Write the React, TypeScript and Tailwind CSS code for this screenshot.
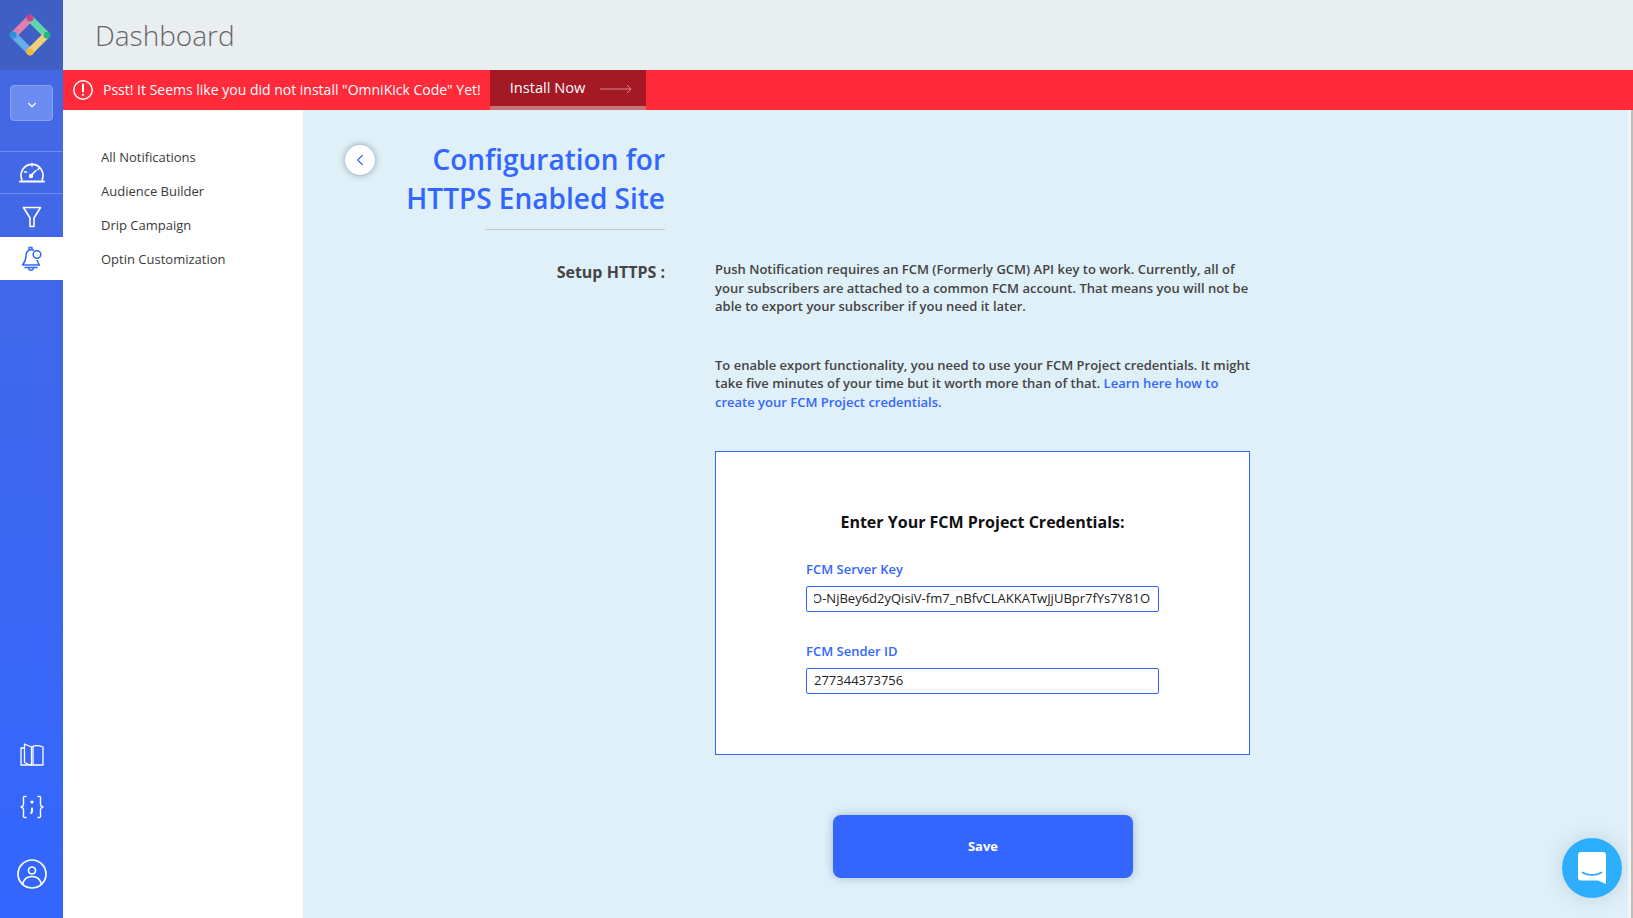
import { ChevronDown, ChevronLeft } from "lucide-react";

const subNavItems = ["All Notifications", "Audience Builder", "Drip Campaign", "Optin Customization"];

function Logo() {
  return (
    <svg width="42" height="42" viewBox="0 0 42 42" fill="none" strokeWidth="7" strokeLinecap="round">
      <path d="M21 4.500 L4.500 21" stroke="#e27fb1" />
      <path d="M21 4.500 L37.500 21" stroke="#5fd6a8" />
      <path d="M4.500 21 L21 37.500" stroke="#67aee6" />
      <path d="M37.500 21 L21 37.500" stroke="#f0cf78" />
      <circle cx="21" cy="4" r="3.500" fill="#d43d8a" />
      <circle cx="38" cy="21" r="3.500" fill="#1fb58d" />
      <circle cx="21" cy="38" r="3.500" fill="#f0b93a" />
      <circle cx="4" cy="21" r="3.500" fill="#2f8fd8" />
    </svg>
  );
}

function GaugeIcon() {
  return (
    <svg width="26" height="24" viewBox="0 0 26 24" fill="none" stroke="currentColor" strokeWidth="1.6" strokeLinecap="round">
      <path d="M3 20 A11 11 0 1 1 23 20" />
      <path d="M1 21.500 H25" strokeWidth="2" />
      <path d="M13 3.500 V6 M5.500 12 H7.500 M20.500 8 L19 9.500" />
      <path d="M12 15.500 L17 10.500" />
      <circle cx="12" cy="16" r="1.400" fill="currentColor" />
    </svg>
  );
}

function FunnelIcon() {
  return (
    <svg width="20" height="22" viewBox="0 0 20 22" fill="none" stroke="currentColor" strokeWidth="1.600" strokeLinejoin="round">
      <path d="M1.500 1.500 H18.500 L12 12 V20.500 H8 V12 Z" />
    </svg>
  );
}

function BellIcon() {
  return (
    <svg width="22" height="26" viewBox="0 0 22 26" fill="none" stroke="currentColor" strokeWidth="1.500" strokeLinecap="round" strokeLinejoin="round">
      <path d="M8 3.500 V1.500 H11 V3.500" />
      <path d="M12.500 4 C7 2.500 5 6.500 5 10 C5 14 4 16 1.500 19 H18.500 C17.500 17.500 16.800 16.500 16.200 14.500" />
      <path d="M4 21.500 H16" />
      <path d="M7.500 22 C8 25 12 25 12.500 22" />
      <circle cx="16" cy="8.500" r="3.800" />
    </svg>
  );
}

function BookIcon() {
  return (
    <svg width="24" height="24" viewBox="0 0 24 24" fill="none" stroke="currentColor" strokeWidth="1.300" strokeLinejoin="round">
      <path d="M11.500 22.500 L4.500 19.500 V1 L11.500 4 Z" />
      <path d="M11.500 4 C14 2.500 18 2 23 4 V22 H13 L11.500 22.500" />
      <path d="M4.500 5 H1 V22 H11.500" />
      <path d="M13 4 V21.500" />
    </svg>
  );
}

function CodeIcon() {
  return (
    <svg width="24" height="24" viewBox="0 0 24 24" fill="none" stroke="currentColor" strokeWidth="1.400" strokeLinecap="round" strokeLinejoin="round">
      <path d="M6 1.500 H4.500 C3 1.500 3.500 3 3.500 5 V9.500 C3.500 11 2.500 11.500 1 12 C2.500 12.500 3.500 13 3.500 14.500 V19 C3.500 21 3 22.500 4.500 22.500 H6" />
      <path d="M18 1.500 H19.500 C21 1.500 20.500 3 20.500 5 V9.500 C20.500 11 21.500 11.500 23 12 C21.500 12.500 20.500 13 20.500 14.500 V19 C20.500 21 21 22.500 19.500 22.500 H18" />
      <circle cx="12" cy="7" r="1.600" fill="currentColor" stroke="none" />
      <path d="M12 13.500 V16.500 L11.200 18" strokeWidth="2" />
    </svg>
  );
}

function UserIcon() {
  return (
    <svg width="30" height="30" viewBox="0 0 30 30" fill="none" stroke="currentColor" strokeWidth="1.700">
      <circle cx="15" cy="15" r="14" />
      <circle cx="15" cy="11.500" r="3.500" />
      <path d="M5.500 25 C7 19.500 11 17.500 15 17.500 C19 17.500 23 19.500 24.500 25" />
    </svg>
  );
}

function AlertIcon() {
  return (
    <svg width="20" height="20" viewBox="0 0 20 20" fill="none" stroke="white" strokeWidth="1.500" strokeLinecap="round">
      <circle cx="10" cy="10" r="9.200" />
      <path d="M10 4.500 V11.500" strokeWidth="2" />
      <circle cx="10" cy="14.800" r="1.100" fill="white" stroke="none" />
    </svg>
  );
}

function Sidebar() {
  return (
    <aside className="flex h-[918px] w-[63px] shrink-0 flex-col bg-gradient-to-b from-[#4668e0] to-[#3366ff] text-white">
      <div className="flex h-[70px] items-center justify-center bg-[#3f5fc4] pr-[3px]">
        <Logo />
      </div>
      <div className="flex h-[81px] items-start justify-center pt-[15px]">
        <div className="flex h-[36px] w-[43px] items-center justify-center rounded-[4px] border border-[#8ba3f5] bg-[#6d8cf2] pt-[3px]">
          <ChevronDown size={14} strokeWidth={2} />
        </div>
      </div>
      <div className="flex h-[42px] items-center justify-center border-t border-[#6d8cf2] pb-[2px]">
        <GaugeIcon />
      </div>
      <div className="flex h-[44px] items-center justify-center border-t border-[#6d8cf2] pt-[2px]">
        <FunnelIcon />
      </div>
      <div className="flex h-[43px] items-center justify-center bg-white pt-[1px] text-[#3366ff]">
        <BellIcon />
      </div>
      <div className="mt-auto flex flex-col items-center pb-[29px]">
        <BookIcon />
        <div className="mt-[28px]">
          <CodeIcon />
        </div>
        <div className="mt-[40px]">
          <UserIcon />
        </div>
      </div>
    </aside>
  );
}

function AlertBar() {
  return (
    <div className="flex h-[40px] items-stretch bg-[#ff2a3a] text-white">
      <div className="flex items-center pb-[1px] pl-[10px]">
        <AlertIcon />
        <span className="ml-[10px] text-[14px]">Psst! It Seems like you did not install "OmniKick Code" Yet!</span>
      </div>
      <div className="ml-[9px] flex h-[40px] w-[156px] items-start border-b-[4px] border-[#c8747a] bg-[#a31924] pl-[20px] pt-[7px]">
        <span className="text-[14.600px] font-medium">Install Now</span>
        <svg className="ml-[15px] mt-[7px] text-[#d98a90]" width="32" height="10" viewBox="0 0 32 10" fill="none" stroke="currentColor" strokeWidth="1">
          <path d="M0 5 H31 M27 1 L31 5 L27 9" />
        </svg>
      </div>
    </div>
  );
}

function SubNav() {
  return (
    <nav className="w-[240px] shrink-0 bg-white pl-[38px] pt-[37px]">
      <ul className="flex flex-col gap-[14px]">
        {subNavItems.map((item) => (
          <li key={item} className="text-[13px] leading-[20px] text-[#3a3a3a]">
            {item}
          </li>
        ))}
      </ul>
    </nav>
  );
}

function CredentialField({ label, value, scrolled }: { label: string; value: string; scrolled?: boolean }) {
  return (
    <div className="w-[353px]">
      <div className="text-[13px] font-semibold leading-[18px] text-[#3366ff]">{label}</div>
      <div className="mt-[8px] flex h-[26px] items-center rounded-[2px] border border-[#3366ff] bg-white px-[7px] text-[13px] text-[#222]">
        <div className={scrolled ? "flex w-full justify-end overflow-hidden pr-[1px]" : ""}>
          <span className="shrink-0 whitespace-nowrap">{value}</span>
        </div>
      </div>
    </div>
  );
}

export default function App() {
  return (
    <div className="flex h-[918px] w-[1633px] overflow-hidden font-['Open_Sans',sans-serif]">
      <Sidebar />
      <div className="flex min-w-0 flex-1 flex-col">
        <header className="flex h-[70px] items-center bg-[#e9eef1] pl-[32px]">
          <h1 className="text-[28px] font-light text-[#666]">Dashboard</h1>
        </header>
        <AlertBar />
        <div className="flex min-h-0 flex-1">
          <SubNav />
          <main className="relative flex flex-1 bg-[#dff0f8] pt-[30px]">
            <button className="ml-[42px] mt-[5px] flex h-[30px] w-[30px] items-center justify-center rounded-full bg-white text-[#3366ff] shadow-[0_0_6px_rgba(40,60,100,0.5)]">
              <ChevronLeft size={18} strokeWidth={1.500} />
            </button>
            <div className="ml-[-72px] flex flex-col">
              <div className="flex">
                <div className="w-[362px] shrink-0 text-right">
                  <h2 className="text-[28px] font-semibold leading-[39px] text-[#3366ff]">
                    Configuration for
                    <br />
                    HTTPS Enabled Site
                  </h2>
                  <div className="ml-auto mt-[11px] h-px w-[180px] bg-[#c4c8cc]" />
                  <div className="mt-[31px] text-[16px] font-bold leading-[22px] text-[#444]">Setup HTTPS :</div>
                </div>
                <div className="ml-[50px] w-[536px] pt-[120px]">
                  <p className="text-[13px] font-semibold leading-[18.500px] text-[#444]">
                    Push Notification requires an FCM (Formerly GCM) API key to work. Currently, all of your subscribers are attached to a common FCM account. That means you will not be able to export your subscriber if you need it later.
                  </p>
                  <p className="mt-[40px] text-[13px] font-semibold leading-[18.500px] text-[#444]">
                    To enable export functionality, you need to use your FCM Project credentials. It might take five minutes of your time but it worth more than of that.{" "}
                    <span className="text-[#3366ff]">Learn here how to create your FCM Project credentials.</span>
                  </p>
                  <section className="mt-[40px] flex h-[304px] w-[535px] flex-col items-center border border-[#3366ff] bg-white pt-[59px]">
                    <h3 className="text-[16px] font-bold leading-[22px] text-[#111]">Enter Your FCM Project Credentials:</h3>
                    <div className="mt-[27px] flex flex-col gap-[30px]">
                      <CredentialField label="FCM Server Key" value="O-NjBey6d2yQisiV-fm7_nBfvCLAKKATwJjUBpr7fYs7Y81O" scrolled />
                      <CredentialField label="FCM Sender ID" value="277344373756" />
                    </div>
                  </section>
                  <div className="mt-[60px] flex justify-center">
                    <button className="h-[63px] w-[300px] rounded-[8px] bg-[#3366ff] pt-[1px] text-[13px] font-bold text-white shadow-[0_0_10px_rgba(40,60,100,0.3)]">
                      Save
                    </button>
                  </div>
                </div>
              </div>
            </div>
            <div className="absolute bottom-[20px] right-[11px] flex h-[60px] w-[60px] items-center justify-center rounded-full bg-[#2eaeff] shadow-[0_0_20px_rgba(40,60,100,0.15)]">
              <svg width="28" height="32" viewBox="0 0 28 32" fill="none">
                <path d="M3 0 H25 A3 3 0 0 1 28 3 V32 L20 28.500 H3 A3 3 0 0 1 0 25.500 V3 A3 3 0 0 1 3 0 Z" fill="white" />
                <path d="M4.500 20.500 C10 24 18 24 23.500 20.500" stroke="#2eaeff" strokeWidth="1.800" strokeLinecap="round" />
              </svg>
            </div>
            <div className="absolute right-0 top-0 h-full w-[5px] border-r-2 border-[#bdbdbd] bg-[#f4f4f4]" />
          </main>
        </div>
      </div>
    </div>
  );
}
